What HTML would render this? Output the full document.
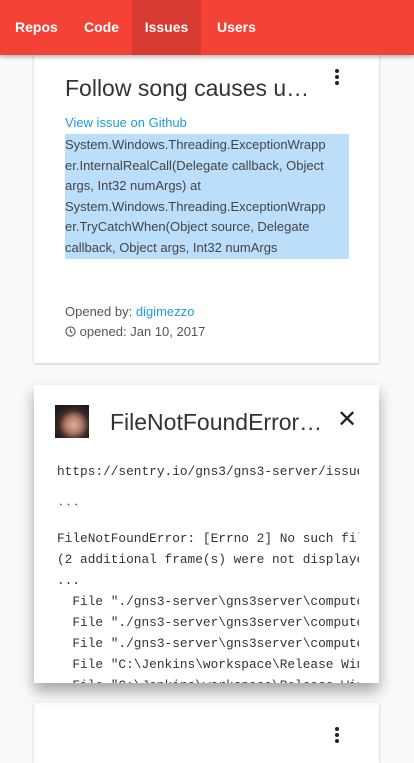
<!DOCTYPE html>
<html><head><meta charset="utf-8"><style>
*{margin:0;padding:0;box-sizing:border-box}
body{width:414px;height:736px;overflow:hidden;background:#fafafa;font-family:"Liberation Sans",sans-serif;position:relative}
.hdr{position:absolute;left:0;top:0;width:414px;height:55px;background:#f44336;box-shadow:0 2px 4px rgba(0,0,0,.3);z-index:5}
.tab{position:absolute;top:0;height:55px;line-height:55px;color:#fff;font-size:14px;font-weight:bold}
.card{position:absolute;left:34px;width:345px;background:#fff;box-shadow:0 1px 3px rgba(0,0,0,.2)}
.t{position:absolute;font-size:23px;color:#333;font-weight:300;white-space:nowrap}
.dots{position:absolute;width:4px}
.dots i{display:block;width:4px;height:4px;border-radius:2px;background:#222;margin-bottom:2px}
.hl{position:absolute;left:31px;top:89px;width:284px;height:125px;background:#bbdefb;font-size:13px;line-height:20.5px;color:#444;padding-top:1px;white-space:nowrap}
.mono{position:absolute;left:23px;font-family:"Liberation Mono",monospace;font-size:12.8px;color:#333;white-space:pre;width:302px;overflow:hidden}
</style></head><body>
<div class="hdr">
<div class="tab" style="left:15px">Repos</div>
<div class="tab" style="left:84px">Code</div>
<div class="tab" style="left:132px;width:69px;background:#d73a31;text-align:center">Issues</div>
<div class="tab" style="left:217px">Users</div>
</div>
<div class="card" style="top:45px;height:318px">
<div class="t" style="left:31px;top:30px">Follow song causes u…</div>
<div class="dots" style="left:301px;top:24px"><i></i><i></i><i></i></div>
<div style="position:absolute;left:31px;top:70px;font-size:13px;color:#1e9be0">View issue on Github</div>
<div class="hl">System.Windows.Threading.ExceptionWrapp<br>er.InternalRealCall(Delegate callback, Object<br>args, Int32 numArgs) at<br>System.Windows.Threading.ExceptionWrapp<br>er.TryCatchWhen(Object source, Delegate<br>callback, Object args, Int32 numArgs</div>
<div style="position:absolute;left:31px;top:259px;font-size:13px;color:#555">Opened by: <span style="color:#1e9be0">digimezzo</span></div>
<div style="position:absolute;left:31px;top:279px;font-size:13px;color:#555"><svg width="11" height="11" viewBox="0 0 12 12" style="vertical-align:-1px"><circle cx="6" cy="6" r="5" fill="none" stroke="#555" stroke-width="1.2"/><path d="M6 3v3l2 1.5" fill="none" stroke="#555" stroke-width="1.2"/></svg> opened: Jan 10, 2017</div>
</div>
<div class="card" style="top:385px;height:298px;box-shadow:0 8px 14px rgba(0,0,0,.35);overflow:hidden;z-index:2">
<div style="position:absolute;left:21px;top:20px;width:34px;height:33px;background:radial-gradient(circle at 55% 60%,#e0b09a 0,#b07a66 30%,#3a2a24 55%,#1d1a1a 80%)"></div>
<div class="t" style="left:76px;top:24px">FileNotFoundError…</div>
<div style="position:absolute;left:303px;top:20px;font-size:24px;color:#222;font-weight:300">✕</div>
<div class="mono" style="top:79px">https://sentry.io/gns3/gns3-server/issues</div>
<div class="mono" style="top:117px">&#96;&#96;&#96;</div>
<div class="mono" style="top:143px;line-height:21px">FileNotFoundError: [Errno 2] No such file
(2 additional frame(s) were not displayed
...
  File "./gns3-server\gns3server\compute
  File "./gns3-server\gns3server\compute
  File "./gns3-server\gns3server\compute
  File "C:\Jenkins\workspace\Release Win
  File "C:\Jenkins\workspace\Release Win</div>
</div>
<div class="card" style="top:703px;height:60px">
<div class="dots" style="left:301px;top:24px"><i></i><i></i><i></i></div>
</div>
</body></html>
